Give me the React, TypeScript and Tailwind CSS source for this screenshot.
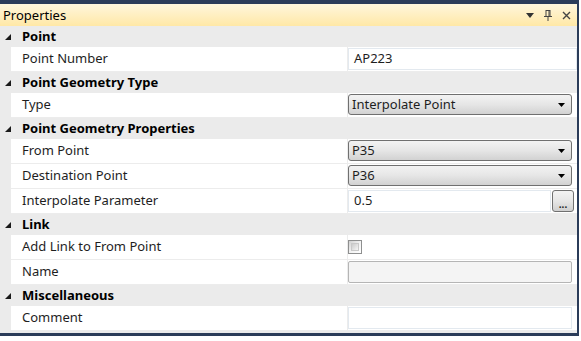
import React from 'react'

type Row =
  | { label: string; kind: 'text'; value: string }
  | { label: string; kind: 'combo'; value: string }
  | { label: string; kind: 'ellipsis'; value: string }
  | { label: string; kind: 'check' }
  | { label: string; kind: 'disabled' }
  | { label: string; kind: 'empty' }

const SECTIONS: { title: string; rows: Row[] }[] = [
  { title: 'Point', rows: [{ label: 'Point Number', kind: 'text', value: 'AP223' }] },
  { title: 'Point Geometry Type', rows: [{ label: 'Type', kind: 'combo', value: 'Interpolate Point' }] },
  {
    title: 'Point Geometry Properties',
    rows: [
      { label: 'From Point', kind: 'combo', value: 'P35' },
      { label: 'Destination Point', kind: 'combo', value: 'P36' },
      { label: 'Interpolate Parameter', kind: 'ellipsis', value: '0.5' },
    ],
  },
  {
    title: 'Link',
    rows: [
      { label: 'Add Link to From Point', kind: 'check' },
      { label: 'Name', kind: 'disabled' },
    ],
  },
  { title: 'Miscellaneous', rows: [{ label: 'Comment', kind: 'empty' }] },
]

function Arrow() {
  return (
    <svg width="7" height="4" viewBox="0 0 7 4" className="shrink-0">
      <polygon points="0,0 7,0 3.5,4" fill="#000" />
    </svg>
  )
}

function Value({ row }: { row: Row }) {
  switch (row.kind) {
    case 'text':
      return (
        <div className="h-full flex items-center px-[5px] border border-[#e3e9ef] bg-white">{row.value}</div>
      )
    case 'combo':
      return (
        <div className="h-[21px] mr-[5px] flex items-center justify-between pl-[3px] pr-[6px] rounded-[3px] border border-[#707070] bg-gradient-to-b from-[#f3f3f3] via-[#e6e6e6] to-[#d2d2d2]">
          <span>{row.value}</span>
          <Arrow />
        </div>
      )
    case 'ellipsis':
      return (
        <div className="h-full flex gap-[1px]">
          <div className="flex-1 flex items-center px-[5px] border border-[#e3e9ef] bg-white">{row.value}</div>
          <div className="w-[22px] mr-[3px] rounded-[3px] border border-[#707070] bg-gradient-to-b from-[#f3f3f3] via-[#e6e6e6] to-[#cfcfcf] flex items-end justify-center pb-[3px]">
            <span className="text-[10px] leading-[8px] font-bold">...</span>
          </div>
        </div>
      )
    case 'check':
      return (
        <div className="h-full flex items-center">
          <div className="w-[14px] h-[14px] border border-[#8e8f8f] bg-gradient-to-br from-[#d0d0d0] via-[#f2f2f2] to-[#ffffff] p-[2px]">
            <div className="w-full h-full border border-[#c9c9c9] bg-gradient-to-br from-[#cbcbcb] to-[#f6f6f6]" />
          </div>
        </div>
      )
    case 'disabled':
      return <div className="h-full mr-[5px] rounded-[2px] border border-[#b5b5b5] bg-[#f4f4f4]" />
    case 'empty':
      return <div className="h-full mr-[5px] border border-[#e3e9ef] bg-white" />
  }
}

export default function App() {
  return (
    <div
      className="w-[581px] h-[341px] bg-white overflow-hidden text-[13px] text-[#1e1e1e]"
      style={{ fontFamily: '"Noto Sans", "Open Sans", sans-serif' }}
    >
      <div className="w-[579px] h-[336px] bg-[#2b3c59] pt-[4px] pr-[2px] pb-[3px] flex flex-col">
        <div className="h-[22px] flex items-center justify-between bg-gradient-to-b from-[#fff6dc] to-[#ffe8a6] pl-[3px] pr-[6px]">
          <span className="text-[13px] text-black leading-none">Properties</span>
          <div className="flex items-center gap-[10px]">
            <svg width="8" height="5" viewBox="0 0 8 5">
              <polygon points="0,0 8,0 4,5" fill="#333" />
            </svg>
            <svg width="8" height="11" viewBox="0 0 8 11">
              <rect x="2" y="0.5" width="4" height="6" fill="none" stroke="#444" />
              <line x1="0" y1="6.5" x2="8" y2="6.5" stroke="#444" />
              <line x1="4" y1="7" x2="4" y2="11" stroke="#444" />
              <line x1="5" y1="1" x2="5" y2="6" stroke="#444" />
            </svg>
            <svg width="9" height="9" viewBox="0 0 9 9">
              <path d="M1 1 L8 8 M8 1 L1 8" stroke="#444" strokeWidth="1.4" />
            </svg>
          </div>
        </div>
        <div className="flex-1 bg-[#ebebeb] flex flex-col">
          {SECTIONS.map((s) => (
            <div key={s.title} className="flex flex-col">
              <div className="h-[21px] flex items-center bg-[#ebebeb]">
                <div className="w-[22px] flex justify-start pl-[5px]">
                  <svg width="6" height="6" viewBox="0 0 6 6">
                    <polygon points="6,0 6,6 0,6" fill="#1a1a1a" />
                  </svg>
                </div>
                <span className="font-bold text-black">{s.title}</span>
              </div>
              {s.rows.map((r) => (
                <div key={r.label} className="h-[25px] flex">
                  <div className="w-[11px] bg-[#ebebeb]" />
                  <div className="flex-1 flex bg-white border-b border-[#ececec]">
                    <div className="flex-1 flex items-center pl-[11px] border-r border-[#ececec]">{r.label}</div>
                    <div className="w-[229px] py-[1px]">
                      <Value row={r} />
                    </div>
                  </div>
                </div>
              ))}
            </div>
          ))}
        </div>
      </div>
    </div>
  )
}
